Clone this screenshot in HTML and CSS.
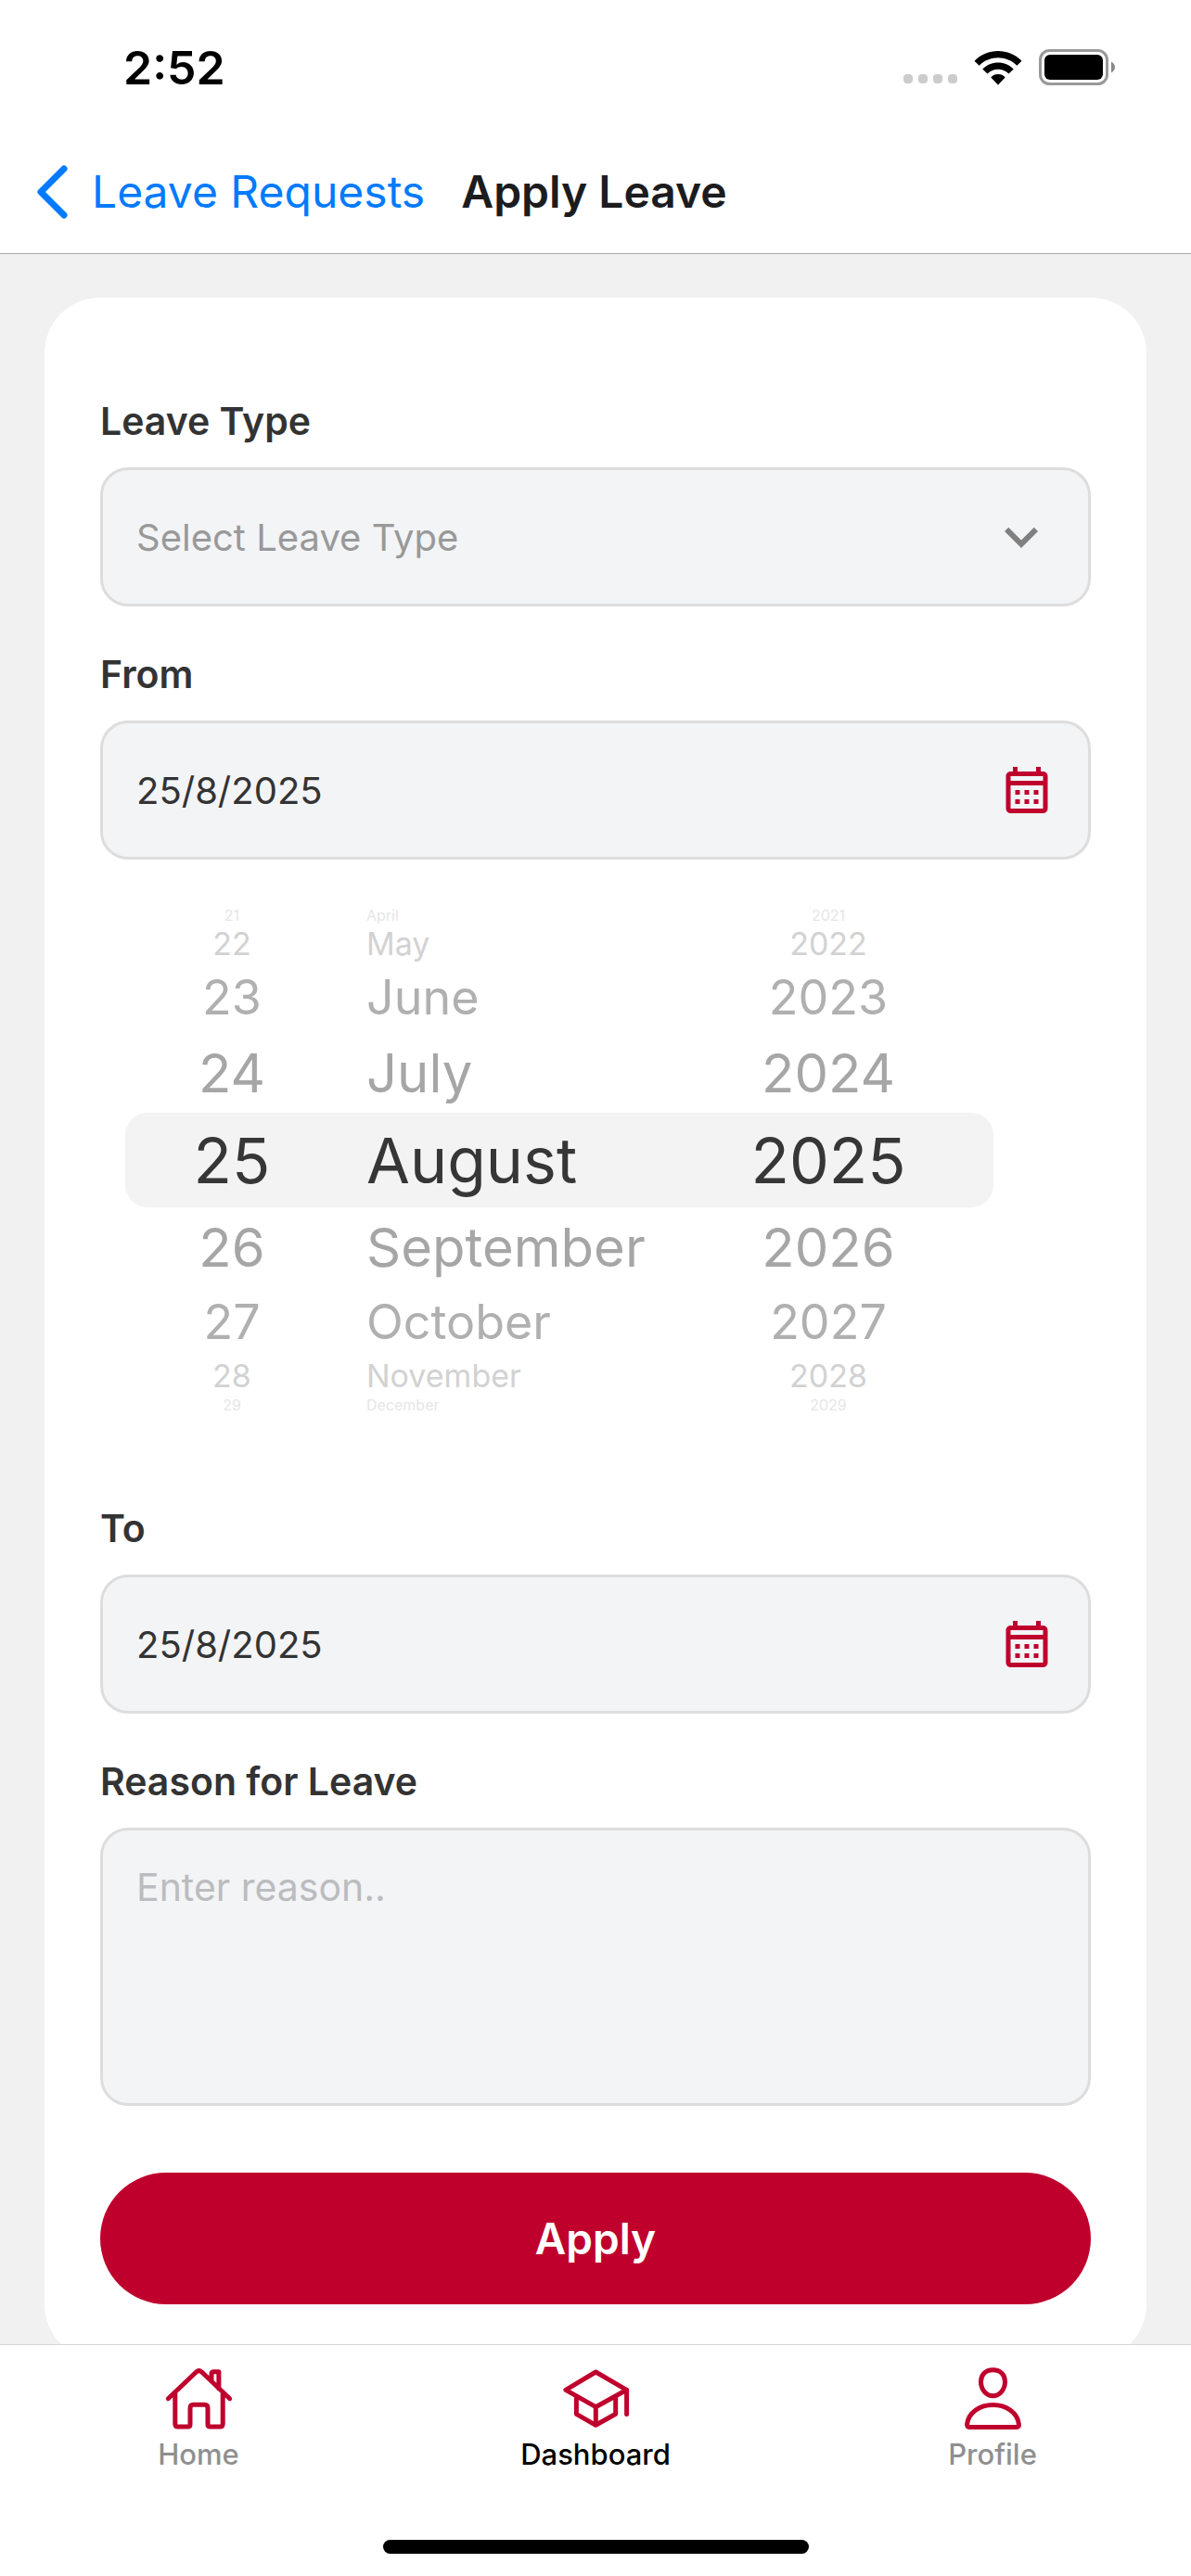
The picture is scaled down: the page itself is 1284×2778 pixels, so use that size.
FILE: index.html
```html
<!DOCTYPE html>
<html lang="en">
<head>
<meta charset="utf-8">
<meta name="viewport" content="width=device-width">
<title>Apply Leave</title>
<link rel="stylesheet" href="styles.css">
</head>
<body>
<div class="app">
  <div class="status-bar">
    <span class="status-time">2:52</span>
    <div class="status-icons">
      <svg width="58" height="13" viewBox="0 0 58 13" aria-hidden="true"><g fill="#ccc"><rect width="10" height="10" rx="4"/><rect x="16" width="10" height="10" rx="4"/><rect x="32" width="10" height="10" rx="4"/><rect x="48" width="10" height="10" rx="4"/></g></svg>
      <svg width="52" height="39" viewBox="0 0 52 39" aria-hidden="true"><path d="M26 37.500L18.300 29.500C20 27 23 26 26 26S32 27 33.700 29.500ZM9.300 20.500C18 11 34 11 42.700 20.500L37.500 25.500C31.500 19 20.500 19 14.500 25.500ZM.5 11.700C14-2.700 38-2.700 51.500 11.700L46.300 16.700C35.500 5.300 16.500 5.300 5.700 16.700Z"/></svg>
      <svg width="83" height="40" viewBox="0 0 83 40" aria-hidden="true"><rect x="1.500" y="1.500" width="72" height="36" rx="10" fill="none" stroke="#999" stroke-width="3"/><rect x="6" y="6" width="63" height="27" rx="6"/><path d="M78 13.500Q82 16 82 19.500T78 25.500Z" fill="#888"/></svg>
    </div>
  </div>

  <header class="nav-bar">
    <a class="back" href="#leave-requests">
      <svg width="36" height="60" viewBox="0 0 36 60" aria-hidden="true"><path d="M31 5L6 30L31 55" fill="none" stroke="currentColor" stroke-width="7" stroke-linecap="round" stroke-linejoin="round"/></svg>
      <span>Leave Requests</span>
    </a>
    <h1 class="nav-title">Apply Leave</h1>
  </header>

  <main class="content">
    <form class="card">
      <div class="field">
        <label class="label" for="leave-type">Leave Type</label>
        <div class="control">
          <select class="input input-empty" id="leave-type"><option>Select Leave Type</option></select>
          <svg class="chevron" viewBox="0 0 24 24" aria-hidden="true"><path d="M7.410 8.580L12 13.170L16.590 8.580L18 10L12 16L6 10Z"/></svg>
        </div>
      </div>

      <div class="field">
        <label class="label" for="from">From</label>
        <div class="control">
          <input class="input" id="from" type="text" value="25/8/2025" readonly>
          <svg class="calendar" viewBox="0 -1 24 24" aria-hidden="true"><path d="M7 11H9V13H7V11M21 5V19C21 20.110 20.110 21 19 21H5C3.890 21 3 20.100 3 19V5C3 3.900 3.900 3 5 3H6V1H8V3H16V1H18V3H19C20.110 3 21 3.900 21 5M5 5V7H19V5H5M19 19V9H5V19H19M15 13V11H17V13H15M11 13V11H13V13H11M7 15H9V17H7V15M15 17V15H17V17H15M11 17V15H13V17H11Z"/></svg>
        </div>
      </div>

      <div class="picker">
        <ul class="wheel" role="listbox" aria-label="Day">
          <li class="edge" role="option">21</li>
          <li class="far" role="option">22</li>
          <li class="mid" role="option">23</li>
          <li class="near" role="option">24</li>
          <li class="current" role="option" aria-selected="true">25</li>
          <li class="near" role="option">26</li>
          <li class="mid" role="option">27</li>
          <li class="far" role="option">28</li>
          <li class="edge" role="option">29</li>
        </ul>
        <ul class="wheel wheel-month" role="listbox" aria-label="Month">
          <li class="edge" role="option">April</li>
          <li class="far" role="option">May</li>
          <li class="mid" role="option">June</li>
          <li class="near" role="option">July</li>
          <li class="current" role="option" aria-selected="true">August</li>
          <li class="near" role="option">September</li>
          <li class="mid" role="option">October</li>
          <li class="far" role="option">November</li>
          <li class="edge" role="option">December</li>
        </ul>
        <ul class="wheel" role="listbox" aria-label="Year">
          <li class="edge" role="option">2021</li>
          <li class="far" role="option">2022</li>
          <li class="mid" role="option">2023</li>
          <li class="near" role="option">2024</li>
          <li class="current" role="option" aria-selected="true">2025</li>
          <li class="near" role="option">2026</li>
          <li class="mid" role="option">2027</li>
          <li class="far" role="option">2028</li>
          <li class="edge" role="option">2029</li>
        </ul>
      </div>

      <div class="field">
        <label class="label" for="to">To</label>
        <div class="control">
          <input class="input" id="to" type="text" value="25/8/2025" readonly>
          <svg class="calendar" viewBox="0 -1 24 24" aria-hidden="true"><path d="M7 11H9V13H7V11M21 5V19C21 20.110 20.110 21 19 21H5C3.890 21 3 20.100 3 19V5C3 3.900 3.900 3 5 3H6V1H8V3H16V1H18V3H19C20.110 3 21 3.900 21 5M5 5V7H19V5H5M19 19V9H5V19H19M15 13V11H17V13H15M11 13V11H13V13H11M7 15H9V17H7V15M15 17V15H17V17H15M11 17V15H13V17H11Z"/></svg>
        </div>
      </div>

      <div class="field">
        <label class="label" for="reason">Reason for Leave</label>
        <textarea class="input input-area" id="reason" placeholder="Enter reason.."></textarea>
      </div>

      <button class="apply" type="button">Apply</button>
    </form>
  </main>

  <nav class="tab-bar">
    <div class="tabs">
      <a class="tab" href="#home">
        <svg class="tab-icon" viewBox="0 0 78 78" aria-hidden="true"><path d="M6.300 39.700L36.800 10.800Q39.500 8.500 42.200 10.800L72.700 39.700M13.800 34V67Q13.800 70 16.800 70H27.500Q30 70 30 67.500V50Q30 46.300 33.500 46.300H45.500Q49 46.300 49 50V67.500Q49 70 51.500 70H62.200Q65.200 70 65.200 67V34M53 20V13Q53 10.700 55.300 10.700H60.900V29"/></svg>
        <span>Home</span>
      </a>
      <a class="tab tab-active" href="#dashboard" aria-current="page">
        <svg class="tab-icon" viewBox="0 0 78 78" aria-hidden="true"><path d="M39.300 11L72.600 30.300L39.300 48.700L6.900 30.300ZM72.600 30.300V56.500M18.400 38V56.300L39.300 68.300L60.700 56.300V38M39.300 48.700V68.300"/></svg>
        <span>Dashboard</span>
      </a>
      <a class="tab" href="#profile">
        <svg class="tab-icon" viewBox="0 0 78 78" aria-hidden="true"><path d="M39.500 8.700C47.500 8.700 52.500 14 52.500 21.500C52.500 30 46.500 36.800 39.500 36.800S26.500 30 26.500 21.500C26.500 14 31.500 8.700 39.500 8.700ZM14 70.400H65Q67.700 70.400 67.400 67.400C66 55 54 46.600 39.500 46.600S13 55 11.600 67.400Q11.300 70.400 14 70.400Z"/></svg>
        <span>Profile</span>
      </a>
    </div>
    <div class="home-indicator"></div>
  </nav>
</div>
</body>
</html>
```
FILE: styles.css
```css
* {
  box-sizing: border-box;
}

body {
  margin: 0;
  background: #fff;
  color: #333;
  font-family: Inter, "Liberation Sans", sans-serif;
}

.app {
  display: flex;
  flex-direction: column;
  height: 100vh;
}

/* Status bar */
.status-bar {
  display: flex;
  align-items: center;
  justify-content: space-between;
  height: 146px;
  padding: 0 81px 0 133px;
  flex: none;
}

.status-time {
  color: #000;
  font-size: 50px;
  font-weight: 600;
  line-height: 60px;
}

.status-icons {
  display: flex;
  align-items: flex-end;
  gap: 18px;
}

.status-icons svg {
  flex: none;
}

/* Navigation bar */
.nav-bar {
  display: flex;
  align-items: center;
  gap: 39px;
  height: 128px;
  padding: 0 38px 6px;
  border-bottom: 1px solid #a8a8a8;
  flex: none;
}

.back {
  display: flex;
  align-items: center;
  gap: 25px;
  color: #007aff;
  font-size: 48px;
  line-height: 60px;
  text-decoration: none;
}

.nav-title {
  margin: 0;
  color: #1c1c1e;
  font-size: 48px;
  font-weight: 600;
  line-height: 60px;
}

/* Form */
.content {
  flex: 1;
  min-height: 0;
  padding: 47px 48px;
  overflow-y: auto;
  scrollbar-width: none;
  background: #f1f1f1;
}

.card {
  padding: 108px 60px 60px;
  border-radius: 60px;
  background: #fff;
}

.field {
  display: flex;
  flex-direction: column;
  gap: 24px;
  margin-bottom: 48px;
}

.label {
  font-size: 41px;
  font-weight: 600;
  line-height: 51px;
}

.control {
  display: grid;
  align-items: center;
}

.control > * {
  grid-area: 1 / 1;
}

.input {
  width: 100%;
  height: 150px;
  margin: 0;
  padding: 0 36px;
  border: 3px solid #ddd;
  border-radius: 30px;
  outline: 0;
  appearance: none;
  background: #f3f4f6;
  color: #333;
  font-family: inherit;
  font-size: 40px;
  line-height: 51px;
}

.input-empty {
  color: #999;
}

.input-area {
  display: block;
  height: 300px;
  padding: 36px;
  font-size: 41px;
  resize: none;
}

.input-area::placeholder {
  color: #bbbcbf;
  opacity: 1;
}

.chevron,
.calendar {
  justify-self: end;
  margin-right: 39px;
  pointer-events: none;
}

.chevron {
  width: 72px;
  height: 72px;
  fill: gray;
}

.calendar {
  width: 60px;
  height: 60px;
  fill: #bf002d;
}

/* Date wheels */
.picker {
  position: relative;
  display: grid;
  grid-template-columns: 230px 1fr 356px;
  align-items: center;
  max-width: 990px;
  height: 648px;
  margin: -48px 0 48px;
  padding: 0 27px;
}

.picker::before {
  content: "";
  position: absolute;
  inset: 273px 27px;
  border-radius: 24px;
  background: #f3f3f3;
}

.wheel {
  position: relative;
  margin: 0;
  padding: 0;
  list-style: none;
  text-align: center;
}

.wheel-month {
  padding-left: 30px;
  text-align: left;
}

.current {
  color: #363636;
  font-size: 68px;
  line-height: 102px;
}

.near {
  color: #a6a6a6;
  font-size: 58px;
  line-height: 86px;
}

.mid {
  color: #b0b0b0;
  font-size: 52px;
  line-height: 76px;
}

.far {
  color: #d2d2d2;
  font-size: 34px;
  line-height: 40px;
}

.edge {
  color: #e6e6e6;
  font-size: 16px;
  line-height: 22px;
}

.apply {
  display: block;
  width: 100%;
  height: 142px;
  margin-top: 72px;
  border: 0;
  border-radius: 71px;
  background: #bf002d;
  color: #fff;
  font-family: inherit;
  font-size: 46px;
  font-weight: 600;
  line-height: 60px;
}

/* Tab bar */
.tab-bar {
  flex: none;
  padding: 18px 0 24px;
  border-top: 1px solid #d5d5d6;
  background: #fff;
}

.tabs {
  display: grid;
  grid-template-columns: repeat(3, 1fr);
}

.tab {
  display: flex;
  flex-direction: column;
  align-items: center;
  gap: 4px;
  color: #8f8f8f;
  font-size: 31px;
  font-weight: 500;
  line-height: 36px;
  text-decoration: none;
}

.tab-active {
  color: #000;
}

.tab-icon {
  width: 78px;
  height: 78px;
  fill: none;
  stroke: #bf002d;
  stroke-width: 5;
  stroke-linecap: round;
  stroke-linejoin: round;
}

.home-indicator {
  width: 459px;
  height: 15px;
  margin: 74px auto 0;
  border-radius: 8px;
  background: #000;
}
```
